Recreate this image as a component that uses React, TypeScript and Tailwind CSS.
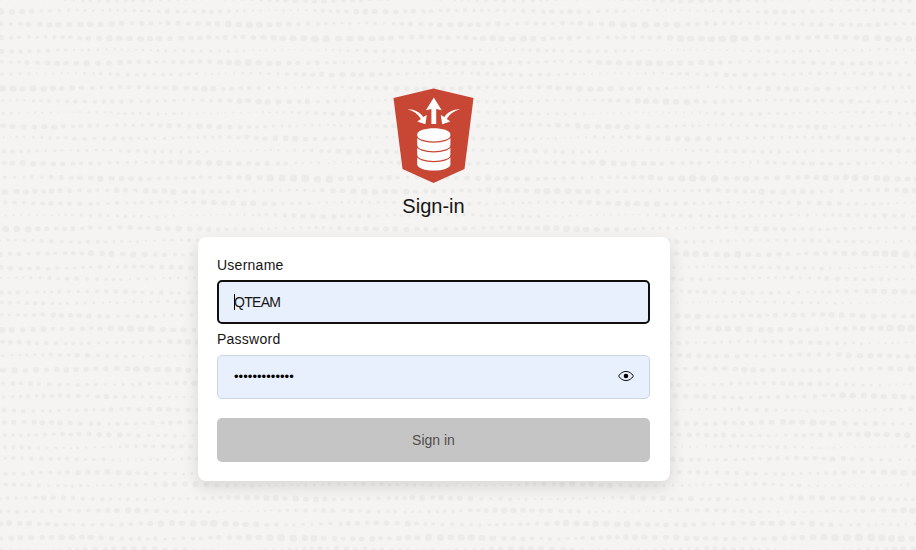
const ROWS = [
  0, 11, 24, 38, 50.5, 62.5, 74, 88, 101, 113, 126, 138, 151, 163, 178, 191,
  203, 215.5, 228.5, 241, 254, 267.5, 278.5, 292, 302.5, 315.5, 329, 342.5,
  355.5, 369.5, 384, 396.5, 410, 423, 435, 447, 459, 473, 485, 498.5, 511, 524,
  538, 549.5,
];

const SIZES = [
  1.8, 2.1, 2.6, 3, 1.6, 2.5, 2, 2.5, 2.1, 1.6, 2.3, 2.1, 1.9, 2.3, 2.8, 2.6,
  2.2, 1.7, 2.5, 1.9, 2.8, 2.1, 1.9, 2.2, 1.6, 2.5, 2.9, 2.2, 2.3, 2.8, 2.2,
  2.4, 2, 2.7, 2.3, 1.6, 2.1, 2.4, 1.9, 2.3, 2.1, 2.6, 2.9, 2.1,
];

function rowPath(y: number, row: number) {
  let seed = (row + 1) * 7919;
  const rand = () => {
    seed = (seed * 16807) % 2147483647;
    return seed / 2147483647;
  };
  rand();
  const phase = rand() * 6.28;
  const phase2 = rand() * 6.28;
  let d = "";
  let x = rand() * 6;
  while (x < 920) {
    const wave = Math.sin(x / 31 + phase) * 0.6 + Math.sin(x / 73 + phase2) * 0.4;
    const rx = Math.max(1, SIZES[row] + wave + (rand() - 0.5) * 0.6);
    const ry = rx * (0.75 + rand() * 0.25);
    const cy = y + Math.sin(x / 31 + phase2) * 0.8 + (rand() - 0.5) * 0.8;
    const f = (n: number) => n.toFixed(2);
    d += `M${f(x - rx)} ${f(cy)}a${f(rx)} ${f(ry)} 0 1 0 ${f(rx * 2)} 0a${f(rx)} ${f(ry)} 0 1 0 ${f(-rx * 2)} 0z`;
    x += 4.6 + rx * 1.35 + rand() * 2.6;
  }
  return d;
}

const DOTS = ROWS.map(rowPath).join("");

function Backdrop() {
  return (
    <svg className="absolute inset-0" width="916" height="550" aria-hidden="true">
      <path d={DOTS} fill="#ecebe9" />
    </svg>
  );
}

function Logo() {
  return (
    <svg width="82" height="96" viewBox="0 0 82 96" className="block" aria-hidden="true">
      <path d="M40.500 .5 80.500 10 71.500 81 40.500 95 9.500 81 .5 10z" fill="#c74634" />
      <g fill="#fff">
        <path d="M40.800 9.500 48.700 22.200 43.200 21v15h-4.800V21l-5.500 1.200z" />
        <path id="in" d="M14.500 21.300c6.500-.3 12.700 3 15.700 7.700l3.600-2-1.400 9.200-8.200-2.800 3.700-2.500c-3-4.800-7.400-8-13.400-9.600z" />
        <path d="M67.100 21.300c-6.500-.3-12.700 3-15.700 7.700l-3.600-2 1.400 9.200 8.200-2.800-3.700-2.500c3-4.800 7.400-8 13.400-9.600z" />
        <path d="M24.200 46.500c0-8.400 33.200-8.400 33.200 0v29.700c0 8.400-33.200 8.400-33.200 0z" />
      </g>
      <path d="M23.500 47.500c1 8.700 33.600 8.700 34.600 0M23.500 57.300c1 8.700 33.600 8.700 34.600 0M23.500 67c1 8.700 33.600 8.700 34.600 0" fill="none" stroke="#c74634" strokeWidth="1.300" />
    </svg>
  );
}

function EyeIcon() {
  return (
    <svg width="16" height="12" viewBox="0 0 16 12" className="mb-[2px] block" aria-hidden="true">
      <path d="M.6 6C4.400-.1 11.600-.1 15.400 6 11.600 12.100 4.400 12.100.6 6z" fill="none" stroke="#161513" strokeWidth="1" />
      <circle cx="8" cy="6" r="2.300" fill="#000" />
    </svg>
  );
}

export default function App() {
  return (
    <main className="relative h-[550px] w-[916px] overflow-hidden bg-[#f5f4f2] font-['Liberation_Sans',Arial,sans-serif] text-[#161513]">
      <Backdrop />
      <div className="relative ml-[197.500px] flex w-[472px] flex-col items-center pt-[88px]">
        <Logo />
        <h1 className="mt-2 text-xl leading-7">Sign-in</h1>
        <form className="mt-[17px] flex h-[244px] w-full flex-col rounded-lg bg-white px-[19.500px] pt-[18px] text-sm shadow-[0_6px_16px_rgba(0,0,0,0.12)]">
          <label className="leading-5 tracking-[0.250px]">Username</label>
          <div className="mt-[5px] flex h-11 items-center rounded-[5px] border-2 border-[#100f0e] bg-[#e8f0fe] pl-[15px]">
            <span className="h-4 w-px bg-black" />
            <span className="-ml-px tracking-[-0.700px]">QTEAM</span>
          </div>
          <label className="mt-[6px] h-5 leading-[19px] tracking-[0.250px]">Password</label>
          <div className="mt-[5px] flex h-11 items-center justify-between rounded-[5px] border border-[#cbd6e4] bg-[#e8f0fe] pr-[15px] pl-4">
            <span className="text-[13px] tracking-[0.050px] text-black">•••••••••••••</span>
            <EyeIcon />
          </div>
          <div className="mt-[19px] flex h-[43.500px] items-center justify-center rounded-[5px] bg-[#c5c5c5] text-[#504e4c]">
            Sign in
          </div>
        </form>
      </div>
    </main>
  );
}
